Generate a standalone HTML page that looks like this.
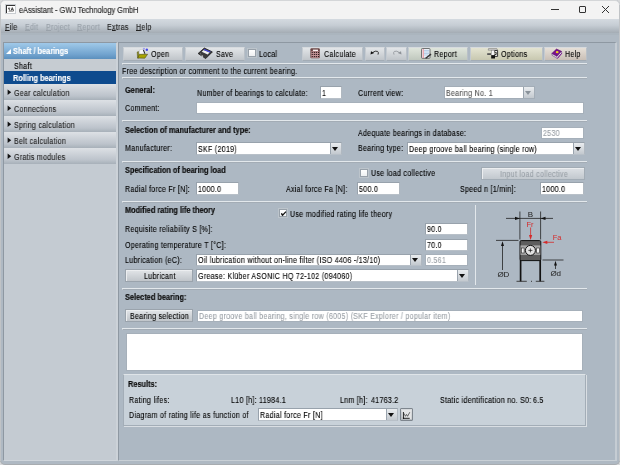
<!DOCTYPE html>
<html><head><meta charset="utf-8">
<style>
*{margin:0;padding:0;box-sizing:border-box}
html,body{width:620px;height:465px;overflow:hidden;background:#d6d8da;font-family:"Liberation Sans",sans-serif;font-size:8.5px;color:#000}
div,span{position:absolute}
.t{white-space:nowrap;height:10px;line-height:10px;letter-spacing:.35px;-webkit-text-stroke-width:.12px;transform:scaleX(.83);transform-origin:0 0;will-change:transform}
.t.b{letter-spacing:0;transform:scaleX(.9)}
.b{font-weight:bold;font-size:8.2px;color:#0a0a0a;-webkit-text-stroke-width:.15px}
.btn{border:1px solid #9aa3ac;box-shadow:inset 1px 1px 0 #eceef0;background:linear-gradient(#e2e5e8,#c0c5ca)}
.inp{background:#fff;border:1px solid #98a2ac;border-bottom-color:#b8c0c8;border-right-color:#b0b8c0}
.sep{height:2px;border-top:1px solid #e3e8ec;border-bottom:1px solid #a3acb5;border-left:1px solid #e3e8ec}
.dd{background:linear-gradient(#e9ecef,#c3c9cf);border-left:1px solid #9aa4ae}
.tri{width:0;height:0;border-left:3.5px solid transparent;border-right:3.5px solid transparent;border-top:4px solid #111}
.side{left:4px;width:112px;height:16px;background:linear-gradient(#dde1e5,#bcc3cb 75%,#a7b0b9)}
.side .t{left:10px;top:4px;color:#222}
.side .arr{left:3.5px;top:5.5px;width:0;height:0;border-top:2.8px solid transparent;border-bottom:2.8px solid transparent;border-left:3.5px solid #111}
.chk{width:8px;height:8px;background:linear-gradient(#fff,#eef0f2);border:1px solid #98a1aa;box-shadow:0 0 0 1px #bcc4cb}
.tb{border-color:#d6dade #b9c0c7 #a3acb5 #c4cad0;box-shadow:none}
u{text-decoration-thickness:.6px;text-underline-offset:.2px}
</style></head><body>
<div style="left:0;top:0;width:620px;height:465px;background:#afb9c3;border:1px solid #a8acb0;border-top:none;border-radius:5px 5px 5px 5px"></div>
<!-- title bar -->
<div style="left:0;top:0;width:620px;height:19px;background:#f3f3f3;border:1px solid #d4d6d8;border-bottom:none;border-radius:5px 5px 0 0"></div>
<div style="left:5px;top:4px;width:11px;height:10px;background:#c9cdd1"></div>
<div style="left:6px;top:5px;width:9px;height:8px;background:#fff;border-left:1.5px solid #333;border-top:1.5px solid #333"></div>
<svg style="position:absolute;left:8px;top:7px" width="6" height="5" viewBox="0 0 6 5"><path d="M0.3 1.2H2.2M0.5 1.2L2 3.8M3 3.8L4.3 0.6L5.6 3.8M3.6 2.8H5" stroke="#333" stroke-width=".9" fill="none"/><path d="M0.5 4.5H5.5" stroke="#777" stroke-width=".6"/></svg>
<div class="t" style="left:19px;top:6px;font-size:8.2px;color:#222;letter-spacing:0;transform:scaleX(.9)">eAssistant - GWJ Technology GmbH</div>
<div style="left:551px;top:9px;width:8px;height:1px;background:#333"></div>
<div style="left:579px;top:6px;width:7px;height:7px;border:1px solid #333;border-radius:1px"></div>
<svg style="position:absolute;left:601px;top:5px" width="9" height="9"><path d="M1 1L8 8M8 1L1 8" stroke="#333" stroke-width="1"/></svg>
<!-- menu -->
<div style="left:0;top:19px;width:620px;height:14px;background:linear-gradient(#d4dae0,#c6cdd4 45%,#a4acb4)"></div>
<div style="left:0;top:33px;width:620px;height:2px;background:#abb5be"></div>
<div class="t" style="left:5px;top:22px;color:#222"><u>F</u>ile</div>
<div class="t" style="left:25px;top:22px;color:#9aa2aa"><u>E</u>dit</div>
<div class="t" style="left:46px;top:22px;color:#9aa2aa"><u>P</u>roject</div>
<div class="t" style="left:77px;top:22px;color:#9aa2aa"><u>R</u>eport</div>
<div class="t" style="left:107px;top:22px;color:#222">E<u>x</u>tras</div>
<div class="t" style="left:136px;top:22px;color:#222"><u>H</u>elp</div>

<!-- sidebar -->
<div style="left:3px;top:42px;width:115px;height:419px;background:#c4cbd2;border:1px solid #8e98a2;border-right:2px solid #ccd2d8;border-bottom-color:#d0d6dc"></div>
<div style="left:4px;top:43px;width:112px;height:16px;background:linear-gradient(#a0c9e9,#72a4cf 70%,#5b8fbd)"></div>
<div style="left:6px;top:48.5px;width:0;height:0;border-left:5px solid transparent;border-bottom:5px solid #fff"></div>
<div class="t b" style="left:13px;top:47px;color:#fff">Shaft / bearings</div>
<div style="left:4px;top:59px;width:112px;height:12px;background:#c6ccd2"></div>
<div class="t" style="left:14px;top:61px">Shaft</div>
<div style="left:4px;top:71px;width:112px;height:13px;background:#0e4b8e"></div>
<div class="t b" style="left:13px;top:74px;color:#fff">Rolling bearings</div>
<div class="side" style="top:84px"><svg style="position:absolute;left:3px;top:5px" width="5" height="7" viewBox="0 0 5 7"><path d="M0.6 0.6L4.2 3.3L0.6 6Z" fill="#111"/></svg><div class="t">Gear calculation</div></div>
<div class="side" style="top:100px"><svg style="position:absolute;left:3px;top:5px" width="5" height="7" viewBox="0 0 5 7"><path d="M0.6 0.6L4.2 3.3L0.6 6Z" fill="#111"/></svg><div class="t">Connections</div></div>
<div class="side" style="top:116px"><svg style="position:absolute;left:3px;top:5px" width="5" height="7" viewBox="0 0 5 7"><path d="M0.6 0.6L4.2 3.3L0.6 6Z" fill="#111"/></svg><div class="t">Spring calculation</div></div>
<div class="side" style="top:132px"><svg style="position:absolute;left:3px;top:5px" width="5" height="7" viewBox="0 0 5 7"><path d="M0.6 0.6L4.2 3.3L0.6 6Z" fill="#111"/></svg><div class="t">Belt calculation</div></div>
<div class="side" style="top:148px"><svg style="position:absolute;left:3px;top:5px" width="5" height="7" viewBox="0 0 5 7"><path d="M0.6 0.6L4.2 3.3L0.6 6Z" fill="#111"/></svg><div class="t">Gratis modules</div></div>

<!-- content panel -->
<div style="left:118px;top:42px;width:499px;height:419px;background:#adb8c3;border:1px solid #8e98a2;border-right:2px solid #c5ccd3;border-bottom-color:#c9d0d6"></div>
<!-- toolbar -->
<div class="btn tb" style="left:123px;top:47px;width:60px;height:14px"></div>
<svg style="position:absolute;left:136px;top:47px" width="13" height="12" viewBox="0 0 13 12">
<path d="M1.2 5L2.6 4.6L3 10.8L1.6 11.2Z" fill="#9a9a10" stroke="#4a4a20" stroke-width=".5"/>
<path d="M3.2 5.6L3.7 2.8L7 2.1L8.3 6.6L3.7 8Z" fill="#f8f8f8" stroke="#b0b0b0" stroke-width=".4"/>
<path d="M7.4 2.8L8.9 6.8" stroke="#222" stroke-width="1"/>
<circle cx="8" cy="1.7" r="1" fill="#9a9aee"/><circle cx="10.8" cy="2.8" r="1.25" fill="#4646e6"/>
<path d="M1.8 11L3.5 7.3L11.6 7.3L8.8 11.2Z" fill="#a8a400" stroke="#50501a" stroke-width=".6"/>
</svg>
<div class="t" style="left:151px;top:49px">Open</div>
<div class="btn tb" style="left:185px;top:47px;width:60px;height:14px"></div>
<svg style="position:absolute;left:197px;top:47px" width="17" height="13" viewBox="0 0 17 13">
<path d="M1.1 6.5L7.3 1L15.4 4.9L8.7 11.6Z" fill="#3c3c3c" stroke="#111" stroke-width=".7" stroke-linejoin="round"/>
<path d="M6.6 3L12.6 5.6L10.6 7.6L4.8 4.8Z" fill="#f0f0f0"/>
<path d="M7.4 1.9L13.8 4.8L12.6 5.6L6.6 3Z" fill="#4b4be6"/>
<path d="M5 8.2L6.4 9L5.6 9.9L4.2 9.1Z" fill="#e0e0e0"/>
<path d="M3 6.6L4.2 7.2" stroke="#aaa" stroke-width=".6"/>
</svg>
<div class="t" style="left:216px;top:49px">Save</div>
<div class="chk" style="left:248px;top:49px"></div>
<div class="t" style="left:259px;top:49px">Local</div>
<div class="btn tb" style="left:302px;top:47px;width:61px;height:14px"></div>
<svg style="position:absolute;left:310px;top:48px" width="10" height="11" viewBox="0 0 10 11">
<rect x=".4" y=".2" width="9.4" height="10" rx="1" fill="#6a4444"/>
<rect x="1.2" y="3.2" width="8" height="6.6" fill="#c49498"/>
<rect x="2.9" y="1.6" width="5.1" height="1.4" fill="#f8f0f0"/>
<g fill="#2a1818"><rect x="1.7" y="3.9" width="1.1" height="1.1"/><rect x="3.8" y="3.9" width="1.1" height="1.1"/><rect x="5.8" y="3.9" width="1.1" height="1.1"/><rect x="7.9" y="3.9" width="1.1" height="1.1"/><rect x="1.7" y="5.9" width="1.1" height="1.1"/><rect x="3.8" y="5.9" width="1.1" height="1.1"/><rect x="5.8" y="5.9" width="1.1" height="1.1"/><rect x="7.9" y="5.9" width="1.1" height="1.1"/><rect x="1.7" y="8.0" width="1.1" height="1.1"/><rect x="3.8" y="8.0" width="1.1" height="1.1"/><rect x="5.8" y="8.0" width="1.1" height="1.1"/><rect x="7.9" y="8.0" width="1.1" height="1.1"/></g>
</svg>
<div class="t" style="left:324px;top:49px">Calculate</div>
<div class="btn tb" style="left:365px;top:47px;width:20px;height:14px"></div>
<svg style="position:absolute;left:370px;top:50px" width="10" height="7" viewBox="0 0 10 7">
<path d="M2.6 2.6Q5.3 0.4 7.6 1.4Q9 2.4 8 4.6" stroke="#222" stroke-width=".9" fill="none"/>
<path d="M0.5 4.6L1 1.3L4.2 3Z" fill="#111"/>
</svg>
<div class="btn tb" style="left:386px;top:47px;width:21px;height:14px"></div>
<svg style="position:absolute;left:392px;top:50px" width="10" height="7" viewBox="0 0 10 7">
<path d="M7.4 2.6Q4.7 0.4 2.4 1.4Q1 2.4 2 4.6" stroke="#8d9297" stroke-width=".8" fill="none"/>
<path d="M9.5 4.6L9 1.3L5.8 3Z" fill="#8d9297"/>
</svg>
<div class="btn tb" style="left:408px;top:47px;width:60px;height:14px;background:linear-gradient(#dfe5dc,#c0c8be)"></div>
<svg style="position:absolute;left:421px;top:48px" width="11" height="11" viewBox="0 0 11 11">
<rect x=".5" y=".5" width="8.5" height="9.8" rx=".8" fill="#e8f0f8" stroke="#555" stroke-width=".8"/>
<path d="M2.2 1V10" stroke="#f08890" stroke-width="1"/>
<g stroke="#8ab0d8" stroke-width=".5"><path d="M3 2.5H8M3 4H8M3 5.5H8M3 7H7"/></g>
<path d="M4 10L9.5 5.5L10.5 6.8L5.2 10.8Z" fill="#333"/>
</svg>
<div class="t" style="left:434px;top:49px">Report</div>
<div class="btn tb" style="left:470px;top:47px;width:73px;height:14px;background:linear-gradient(#e4e4d2,#c8c8b0)"></div>
<svg style="position:absolute;left:487px;top:48px" width="12" height="11" viewBox="0 0 12 11">
<path d="M1.5 0.6H9.8L10.6 2.2H1.2Z" fill="#d8d8d8" stroke="#666" stroke-width=".5"/>
<path d="M7.4 2.5H10.6V8.4H7.6V6.5H9.2V4.3H7.4Z" fill="#f4f4f4" stroke="#222" stroke-width=".9" stroke-linejoin="round"/>
<rect x="4.3" y="2.2" width="2.9" height="5.2" fill="#fafafa" stroke="#777" stroke-width=".5"/>
<rect x="0.2" y="5.2" width="3.8" height="1.8" fill="#555"/>
<rect x="4.2" y="7.2" width="3.8" height="3.3" fill="#111"/>
</svg>
<div class="t" style="left:501px;top:49px">Options</div>
<div class="btn tb" style="left:544px;top:47px;width:43px;height:14px;background:linear-gradient(#e6e0d8,#c9bfb6)"></div>
<svg style="position:absolute;left:551px;top:48px" width="12" height="11" viewBox="0 0 12 11">
<path d="M0.8 5.5L5.5 1L10.5 3.3L6 8.5Z" fill="#7a0e8e" stroke="#4a0a60" stroke-width=".5"/>
<path d="M0.8 5.5L1.2 7.4L6.4 10.4L10.8 5.2L10.5 3.3L6 8.5Z" fill="#e8e8e8" stroke="#50106a" stroke-width=".5"/>
<path d="M6.4 10.4L10.8 5.2" stroke="#7a1090" stroke-width="1"/>
<ellipse cx="6.2" cy="4.2" rx="1.4" ry="1.1" fill="#e8d020"/>
</svg>
<div class="t" style="left:565px;top:49px">Help</div>
<div class="sep" style="left:122px;top:63px;width:465px"></div>
<div class="t" style="left:122px;top:66px">Free description or comment to the current bearing.</div>
<div class="sep" style="left:122px;top:77px;width:465px"></div>

<!-- General -->
<div class="t b" style="left:125px;top:86px">General:</div>
<div class="t" style="left:197px;top:88px">Number of bearings to calculate:</div>
<div class="inp" style="left:320px;top:86px;width:22px;height:13px"></div>
<div class="t" style="left:322px;top:88px">1</div>
<div class="t" style="left:358px;top:88px">Current view:</div>
<div class="inp" style="left:444px;top:86px;width:91px;height:13px;border-color:#a3adb7"></div>
<div class="t" style="left:446px;top:88px;color:#555">Bearing No. 1</div>
<div class="dd" style="left:523px;top:87px;width:11px;height:11px"></div>
<div class="tri" style="left:525px;top:91px;border-top-color:#8a929a"></div>
<div class="t" style="left:125px;top:103px">Comment:</div>
<div class="inp" style="left:196px;top:102px;width:388px;height:12px;border-color:#a6b0ba"></div>
<div class="sep" style="left:122px;top:120px;width:465px"></div>

<!-- Manufacturer -->
<div class="t b" style="left:125px;top:126px">Selection of manufacturer and type:</div>
<div class="t" style="left:358px;top:128px">Adequate bearings in database:</div>
<div class="inp" style="left:541px;top:127px;width:43px;height:12px;border-color:#a6b0ba"></div>
<div class="t" style="left:543px;top:128px;color:#9aa0a6">2530</div>
<div class="t" style="left:125px;top:143px">Manufacturer:</div>
<div class="inp" style="left:196px;top:142px;width:146px;height:13px"></div>
<div class="t" style="left:198px;top:144px">SKF (2019)</div>
<div class="dd" style="left:330px;top:143px;width:11px;height:11px"></div>
<div class="tri" style="left:332px;top:147px"></div>
<div class="t" style="left:358px;top:143px">Bearing type:</div>
<div class="inp" style="left:407px;top:142px;width:178px;height:13px"></div>
<div class="t" style="left:409px;top:144px">Deep groove ball bearing (single row)</div>
<div class="dd" style="left:573px;top:143px;width:11px;height:11px"></div>
<div class="tri" style="left:575px;top:147px"></div>
<div class="sep" style="left:122px;top:161px;width:465px"></div>

<!-- Load -->
<div class="t b" style="left:125px;top:166px">Specification of bearing load</div>
<div class="chk" style="left:360px;top:169px"></div>
<div class="t" style="left:371px;top:168px">Use load collective</div>
<div class="btn" style="left:481px;top:167px;width:104px;height:13px;border-color:#a2acb5;background:linear-gradient(#dde1e5,#c2c8ce)"></div>
<div class="t" style="left:500px;top:169px;color:#9aa1a8">Input load collective</div>
<div class="t" style="left:125px;top:184px">Radial force Fr [N]:</div>
<div class="inp" style="left:196px;top:182px;width:43px;height:13px"></div>
<div class="t" style="left:198px;top:184px">1000.0</div>
<div class="t" style="left:286px;top:184px">Axial force Fa [N]:</div>
<div class="inp" style="left:357px;top:182px;width:43px;height:13px"></div>
<div class="t" style="left:359px;top:184px">500.0</div>
<div class="t" style="left:460px;top:184px">Speed n [1/min]:</div>
<div class="inp" style="left:540px;top:182px;width:44px;height:13px"></div>
<div class="t" style="left:542px;top:184px">1000.0</div>
<div class="sep" style="left:122px;top:201px;width:465px"></div>

<!-- Modified rating -->
<div class="t b" style="left:125px;top:206px">Modified rating life theory</div>
<div class="chk" style="left:279px;top:209px"></div><svg style="position:absolute;left:280px;top:210px" width="7" height="7" viewBox="0 0 7 7"><path d="M1.4 3.2L2.6 5.2L6 1.6" stroke="#111" stroke-width="1.2" fill="none"/><circle cx="2.3" cy="4.6" r=".9" fill="#111"/></svg>
<div class="t" style="left:290px;top:209px">Use modified rating life theory</div>
<div class="t" style="left:125px;top:224px">Requisite reliability S [%]:</div>
<div class="inp" style="left:425px;top:223px;width:43px;height:12px"></div>
<div class="t" style="left:427px;top:224px">90.0</div>
<div class="t" style="left:125px;top:240px">Operating temperature T [°C]:</div>
<div class="inp" style="left:425px;top:239px;width:43px;height:12px"></div>
<div class="t" style="left:427px;top:240px">70.0</div>
<div class="t" style="left:125px;top:255px">Lubrication (eC):</div>
<div class="inp" style="left:196px;top:254px;width:226px;height:12px"></div>
<div class="t" style="left:198px;top:255px">Oil lubrication without on-line filter (ISO 4406 -/13/10)</div>
<div class="dd" style="left:410px;top:255px;width:11px;height:10px"></div>
<div class="tri" style="left:412px;top:258px"></div>
<div class="inp" style="left:425px;top:254px;width:43px;height:12px;border-color:#a6b0ba"></div>
<div class="t" style="left:427px;top:255px;color:#9aa0a6">0.561</div>
<div class="btn" style="left:125px;top:269px;width:68px;height:13px"></div>
<div class="t" style="left:144px;top:271px">Lubricant</div>
<div class="inp" style="left:196px;top:269px;width:273px;height:13px"></div>
<div class="t" style="left:198px;top:271px">Grease: Klüber ASONIC HQ 72-102 (094060)</div>
<div class="dd" style="left:457px;top:270px;width:11px;height:11px"></div>
<div class="tri" style="left:459px;top:274px"></div>
<div style="left:475px;top:205px;width:1px;height:80px;background:#e2e7eb"></div>
<svg style="position:absolute;left:490px;top:205px" width="80" height="82" viewBox="0 0 80 82" font-family="Liberation Sans" font-size="8">
<g stroke="#222" stroke-width=".8" fill="none">
<path d="M29.9 6.5V34.5M50.6 6.5V34.5"/>
<path d="M16 13.4H63"/>
<path d="M6 35.4H28.5M52.5 55H73.5"/>
<path d="M12.5 38V65"/>
<path d="M65.5 58V64"/>
</g>
<g fill="#111">
<path d="M29.9 13.4L25 11.8V15Z"/><path d="M50.6 13.4L55.5 11.8V15Z"/>
<path d="M12.5 36.2L11 41H14Z"/><path d="M65.5 55.8L64 60.5H67Z"/>
</g>
<text x="37.8" y="12" fill="#222">B</text>
<g stroke="#d42a2a" stroke-width=".8"><path d="M40.6 22.5V31"/><path d="M64 37.3H56"/></g>
<g fill="#d42a2a"><path d="M40.6 35L39 30H42.2Z"/><path d="M52.3 37.3L57.3 35.7V38.9Z"/></g>
<text x="36.5" y="22.3" fill="#d42a2a" letter-spacing="-.2" font-size="7.5">Fr</text>
<text x="62.8" y="35" fill="#d42a2a" letter-spacing="-.2" font-size="7.5">Fa</text>
<rect x="30" y="35.6" width="20.8" height="20" rx="1.2" fill="#5e5e5e" stroke="#111" stroke-width="1"/>
<rect x="30.5" y="40.4" width="19.8" height="9.5" fill="#a8a8a8"/>
<rect x="31.3" y="43" width="2.8" height="5" fill="#f4f4f4" stroke="#222" stroke-width=".6"/>
<rect x="46.7" y="43" width="2.8" height="5" fill="#f4f4f4" stroke="#222" stroke-width=".6"/>
<circle cx="40.4" cy="45.4" r="5" fill="#e2e2e2" stroke="#111" stroke-width="1"/>
<path d="M38.4 45.4H42.4M40.4 43.4V47.4" stroke="#111" stroke-width=".7"/>
<path d="M30.6 55V76.5M50.2 55V76.5" stroke="#111" stroke-width="1.7"/>
<path d="M26.5 76.3H36.8M45.8 76.3H54.4" stroke="#333" stroke-width=".9"/>
<rect x="41" y="75.8" width="1" height="1" fill="#333"/>
<text x="7.5" y="71.5" fill="#222" letter-spacing="-.3">ØD</text>
<text x="60.5" y="71.2" fill="#222" letter-spacing="-.3">Ød</text>
</svg>
<div class="sep" style="left:122px;top:288px;width:465px"></div>

<!-- Selected bearing -->
<div class="t b" style="left:125px;top:293px">Selected bearing:</div>
<div class="btn" style="left:125px;top:309px;width:68px;height:13px"></div>
<div class="t" style="left:130px;top:311px">Bearing selection</div>
<div class="inp" style="left:197px;top:310px;width:386px;height:12px;border-color:#a6b0ba"></div>
<div class="t" style="left:199px;top:311px;color:#999fa5">Deep groove ball bearing, single row (6005) (SKF Explorer / popular item)</div>
<div class="sep" style="left:122px;top:328px;width:465px"></div>
<div class="inp" style="left:126px;top:333px;width:457px;height:38px;border-color:#a6b0ba"></div>

<!-- Results -->
<div style="left:123px;top:374px;width:463px;height:52px;background:#c8d1d9;border:1px solid #a3adb7;border-top-color:#dfe4e8;box-shadow:1px 1px 0 #d9dee3"></div>
<div class="t b" style="left:128px;top:380px">Results:</div>
<div class="t" style="left:129px;top:395px">Rating lifes:</div>
<div class="t" style="left:231px;top:395px">L10 [h]:</div><div class="t" style="left:259px;top:395px">11984.1</div>
<div class="t" style="left:340px;top:395px">Lnm [h]:</div><div class="t" style="left:371px;top:395px">41763.2</div>
<div class="t" style="left:440px;top:395px">Static identification no. S0:</div><div class="t" style="left:533px;top:395px">6.5</div>
<div class="t" style="left:129px;top:410px">Diagram of rating life as function of</div>
<div class="inp" style="left:258px;top:408px;width:140px;height:13px"></div>
<div class="t" style="left:260px;top:410px">Radial force Fr [N]</div>
<div class="dd" style="left:386px;top:409px;width:11px;height:11px"></div>
<div class="tri" style="left:388px;top:413px"></div>
<div style="left:400px;top:408px;width:13px;height:13px;border:1px solid #7e868e;border-radius:1px;background:linear-gradient(#d8dbde,#b4b9be)"></div>
<svg style="position:absolute;left:401px;top:409px" width="11" height="11" viewBox="0 0 11 11">
<rect x="1" y="1" width="9.5" height="9" fill="#e4e5e6"/>
<path d="M2.4 3V9.3H8.7" stroke="#222" stroke-width="1" fill="none"/>
<path d="M3.2 4.5L4.4 7.3L5.6 5.4L6.6 7.3L8.8 3.2" stroke="#333" stroke-width=".7" fill="none"/>
<rect x="1.8" y="8.6" width="1.3" height="1.3" fill="#111"/>
</svg>
<div style="left:619px;top:5px;width:1px;height:456px;background:#c0c3c6"></div>
<div style="left:0;top:5px;width:1px;height:456px;background:#c0c3c6"></div>
</body></html>
